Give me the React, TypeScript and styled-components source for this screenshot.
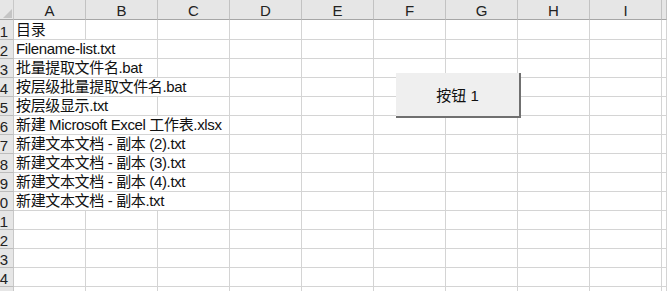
import React from "react";
import styled, { createGlobalStyle } from "styled-components";

const GlobalStyle = createGlobalStyle`
	html, body {
		margin: 0;
		padding: 0;
		background: #ffffff;
		overflow: hidden;
	}
	body {
		font-family: "Liberation Sans", "Noto Sans CJK SC", sans-serif;
	}
`;

const COLS = ["A", "B", "C", "D", "E", "F", "G", "H", "I"];

const rows = [
	{ text: "目录", span: 1 },
	{ text: "Filename-list.txt", span: 2 },
	{ text: "批量提取文件名.bat", span: 2 },
	{ text: "按层级批量提取文件名.bat", span: 3 },
	{ text: "按层级显示.txt", span: 2 },
	{ text: "新建 Microsoft Excel 工作表.xlsx", span: 3 },
	{ text: "新建文本文档 - 副本 (2).txt", span: 3 },
	{ text: "新建文本文档 - 副本 (3).txt", span: 3 },
	{ text: "新建文本文档 - 副本 (4).txt", span: 3 },
	{ text: "新建文本文档 - 副本.txt", span: 3 },
	{ text: "", span: 1 },
	{ text: "", span: 1 },
	{ text: "", span: 1 },
	{ text: "", span: 1 },
	{ text: "", span: 1 },
];

const Sheet = styled.div`
	position: relative;
	width: 667px;
	height: 291px;
	overflow: hidden;
	background: #ffffff;
`;

const Row = styled.div<{ $h: number }>`
	display: grid;
	grid-template-columns: 14px repeat(9, 72px) 1fr;
	height: ${({ $h }) => $h}px;
`;

const Corner = styled.div`
	position: relative;
	background: #e6e6e6;
	border-right: 1px solid #c8c8c8;
	border-bottom: 1px solid #a6a6a6;
	svg {
		position: absolute;
		right: 1px;
		bottom: 1px;
	}
`;

const ColHead = styled.div`
	display: flex;
	align-items: center;
	justify-content: center;
	background: #e6e6e6;
	border-right: 1px solid #c2c2c2;
	border-bottom: 1px solid #a6a6a6;
	font-size: 15px;
	color: #222;
	padding-top: 1px;
`;

const RowHead = styled.div`
	display: flex;
	align-items: center;
	justify-content: flex-end;
	overflow: hidden;
	white-space: nowrap;
	background: #e6e6e6;
	border-right: 1px solid #c8c8c8;
	border-bottom: 1px solid #bdbdbd;
	font-size: 15px;
	color: #222;
	padding-right: 5px;
	padding-top: 3px;
`;

const Cell = styled.div<{ $span: number }>`
	grid-column: span ${({ $span }) => $span};
	display: flex;
	align-items: flex-end;
	white-space: nowrap;
	border-right: 1px solid #d4d4d4;
	border-bottom: 1px solid #d4d4d4;
	padding: 0 0 1px 2px;
	font-size: 15px;
	line-height: 17px;
	letter-spacing: -0.35px;
	color: #111;
`;

const Button = styled.div`
	position: absolute;
	left: 396px;
	top: 73px;
	width: 123px;
	height: 43px;
	display: flex;
	align-items: center;
	justify-content: center;
	background: #efefef;
	border-right: 2px solid #707070;
	border-bottom: 2px solid #707070;
	font-size: 15px;
	color: #111;
`;

const App = () => {
	return (
		<>
			<GlobalStyle />
			<Sheet>
				<Row $h={20}>
					<Corner>
						<svg width="9" height="9" viewBox="0 0 9 9">
							<polygon points="9,0 9,9 0,9" fill="#c4c4c4" />
						</svg>
					</Corner>
					{COLS.map((c) => (
						<ColHead key={c}>{c}</ColHead>
					))}
					<ColHead />
				</Row>
				{rows.map((r, i) => {
					const rest = 10 - r.span;
					return (
						<Row key={i} $h={i === 0 ? 20 : 19}>
							<RowHead>{i + 1}</RowHead>
							<Cell $span={r.span}>{r.text}</Cell>
							{Array.from({ length: rest }).map((_, j) => (
								<Cell key={j} $span={1} />
							))}
						</Row>
					);
				})}
				<Button>按钮 1</Button>
			</Sheet>
		</>
	);
};

export default App;
